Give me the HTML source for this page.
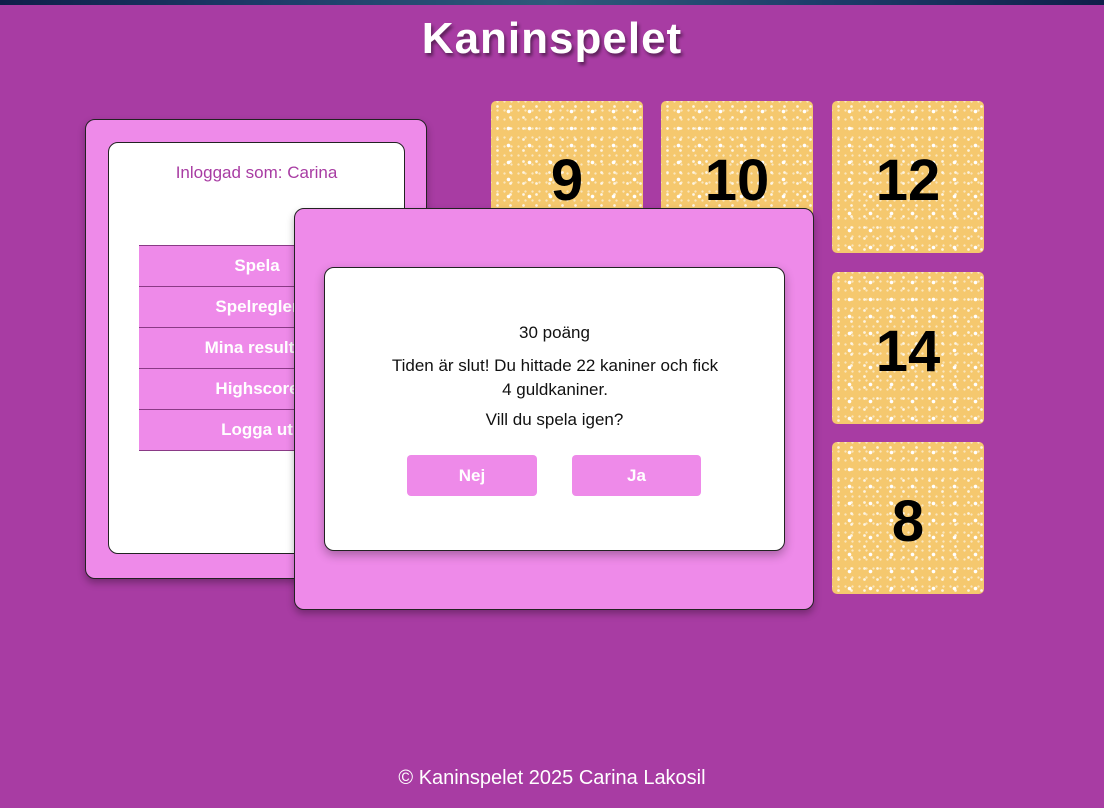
<!DOCTYPE html>
<html><head><meta charset="utf-8"><style>
body{margin:0;width:1104px;height:808px;background:#a83ca3;position:relative;overflow:hidden;font-family:"Comic Sans MS","Liberation Sans",sans-serif}
.top{position:absolute;left:0;top:0;width:1104px;height:5px;background:linear-gradient(90deg,#0f1f4a,#1d3c6a,#2d5a7a,#1d3c6a,#0f1f4a)}
h1{position:absolute;top:14px;left:0;width:1104px;text-align:center;margin:0;color:#fff;font-size:44px;font-weight:bold;text-shadow:2px 3px 3px rgba(0,0,0,.45);letter-spacing:1px}
.panel{position:absolute;left:85px;top:119px;width:340px;height:458px;background:#ee8ae9;border:1px solid #222;border-radius:10px;box-shadow:0 4px 8px rgba(0,0,0,.3)}
.pin{position:absolute;left:108px;top:142px;width:295px;height:410px;background:#fff;border:1px solid #222;border-radius:10px}
.login{position:absolute;left:108px;top:163px;width:297px;text-align:center;color:#a83ca3;font-size:17px}
.menu{position:absolute;left:139px;top:245px;width:236px}
.menu div{height:40px;border-bottom:1px solid #8a3a86;background:#ee8ae9;color:#fff;font:bold 17px "Liberation Sans",sans-serif;text-align:center;line-height:40px}
.menu div:first-child{border-top:1px solid #8a3a86}
.card{position:absolute;width:152px;height:152px;border-radius:5px;background-color:#f5c86e;
background-image:radial-gradient(circle,rgba(255,255,255,.8) 1.1px,transparent 1.6px),radial-gradient(circle,rgba(255,255,255,.55) 0.9px,transparent 1.4px),radial-gradient(circle,#fff 1.5px,transparent 2.1px);
background-size:13px 11px,7px 9px,21px 17px;background-position:0 0,3px 5px,7px 2px;
font:bold 58px "Comic Sans MS","Liberation Sans",sans-serif;color:#000;text-align:center;line-height:160px}
.modal{position:absolute;left:294px;top:208px;width:518px;height:400px;background:#ee8ae9;border:1px solid #222;border-radius:10px;box-shadow:0 4px 8px rgba(0,0,0,.3)}
.min{position:absolute;left:324px;top:267px;width:459px;height:282px;background:#fff;border:1px solid #222;border-radius:10px;box-shadow:0 4px 10px rgba(0,0,0,.3);text-align:center;font-size:17px;color:#111}
.btn{position:absolute;top:455px;width:130px;height:41px;background:#ee8ae9;border-radius:4px;color:#fff;font:bold 17px "Liberation Sans",sans-serif;text-align:center;line-height:41px}
.foot{position:absolute;top:767px;left:0;width:1104px;text-align:center;color:#fff;font-size:20px}
</style></head><body>
<div class="top"></div>
<h1>Kaninspelet</h1>
<div class="panel"></div><div class="pin"></div>
<div class="login">Inloggad som: Carina</div>
<div class="menu"><div>Spela</div><div>Spelregler</div><div>Mina resultat</div><div>Highscore</div><div>Logga ut</div></div>
<div class="card" style="left:491px;top:101px">9</div>
<div class="card" style="left:661px;top:101px">10</div>
<div class="card" style="left:832px;top:101px">12</div>
<div class="card" style="left:832px;top:272px">14</div>
<div class="card" style="left:832px;top:442px">8</div>
<div class="modal"></div>
<div class="min">
<div style="position:absolute;top:55px;width:100%">30 poäng</div>
<div style="position:absolute;top:86px;left:40px;width:380px;line-height:24px">Tiden är slut! Du hittade 22 kaniner och fick<br>4 guldkaniner.</div>
<div style="position:absolute;top:142px;width:100%">Vill du spela igen?</div>
</div>
<div class="btn" style="left:407px">Nej</div>
<div class="btn" style="left:572px;width:129px">Ja</div>
<div class="foot">© Kaninspelet 2025 Carina Lakosil</div>
</body></html>
